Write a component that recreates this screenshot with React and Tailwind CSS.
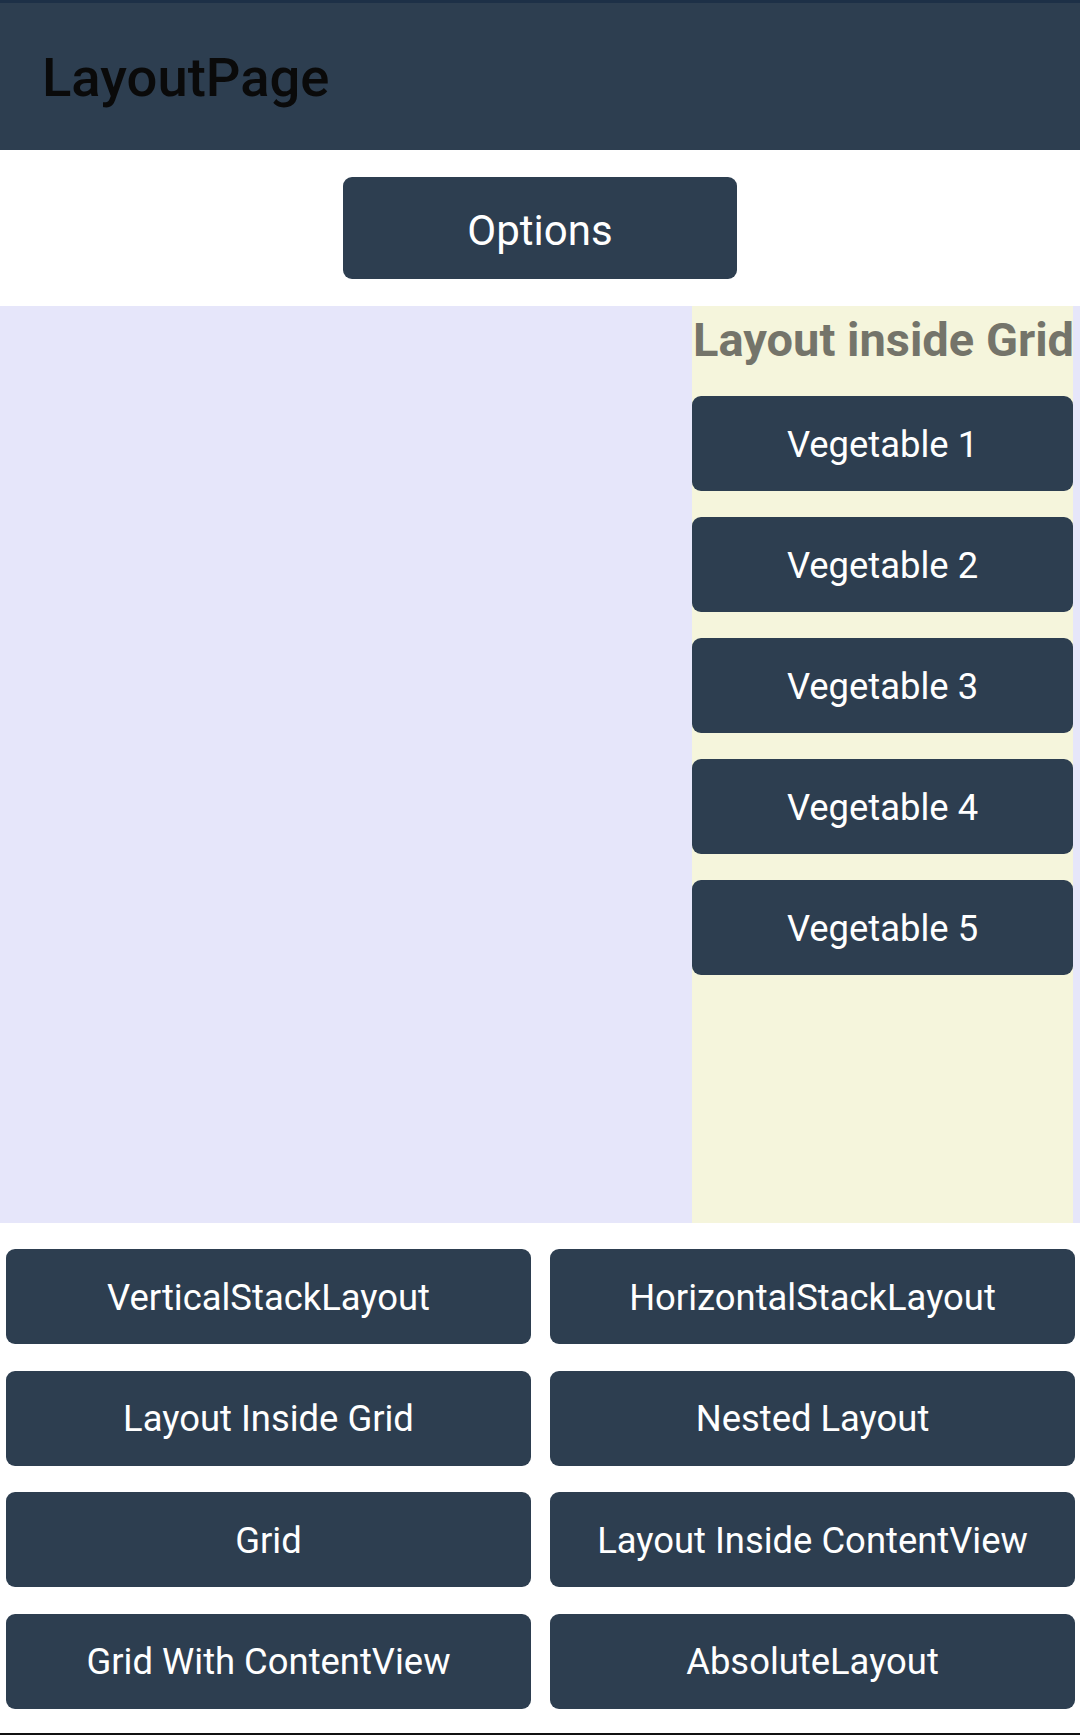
import React from "react";

const font = { fontFamily: "Roboto, 'Noto Sans', sans-serif" };

function Btn({ children, className = "" }) {
  return (
    <div
      className={
        "flex items-center justify-center rounded-[9px] bg-[#2d3e50] text-white leading-none whitespace-nowrap " +
        className
      }
    >
      {children}
    </div>
  );
}

export default function App() {
  const vegs = ["Vegetable 1", "Vegetable 2", "Vegetable 3", "Vegetable 4", "Vegetable 5"];
  const bottom = [
    "VerticalStackLayout",
    "HorizontalStackLayout",
    "Layout Inside Grid",
    "Nested Layout",
    "Grid",
    "Layout Inside ContentView",
    "Grid With ContentView",
    "AbsoluteLayout",
  ];
  return (
    <div
      className="w-[1080px] h-[1735px] flex flex-col bg-white overflow-hidden font-['Roboto',sans-serif]"
      style={font}
    >
      <div className="h-[3px] bg-[#1d3047] shrink-0" />
      <div className="h-[147px] shrink-0 bg-[#2d3e50] flex items-center pl-[42px] pt-[4px]">
        <span className="text-[54.4px] font-medium text-[#0a0a0a] leading-none">LayoutPage</span>
      </div>
      <div className="shrink-0 py-[27px] flex justify-center">
        <Btn className="w-[394px] h-[102px] text-[42px] pt-[5px]">Options</Btn>
      </div>
      <div className="h-[917px] shrink-0 bg-[#e6e6fa] flex">
        <div className="w-[692px] shrink-0" />
        <div className="w-[381px] shrink-0 bg-[#f5f5dc] flex flex-col pt-[6px]">
          <div className="text-[47px] font-bold text-[#74746a] whitespace-nowrap leading-[55px] pl-[1px]">
            Layout inside Grid
          </div>
          <div className="flex flex-col gap-[26px] mt-[29px]">
            {vegs.map((v) => (
              <Btn key={v} className="h-[95px] text-[36.4px] pt-[3px]">
                {v}
              </Btn>
            ))}
          </div>
        </div>
        <div className="flex-1" />
      </div>
      <div className="flex-1 flex flex-col">
        <div className="grid grid-cols-2 gap-x-[19px] gap-y-[26.5px] pl-[6px] pr-[5px] pt-[26px]">
          {bottom.map((b) => (
            <Btn key={b} className="h-[95px] text-[36.4px] pt-[3px]">
              {b}
            </Btn>
          ))}
        </div>
        <div className="flex-1" />
        <div className="h-[2px] bg-[#111111]" />
      </div>
    </div>
  );
}
